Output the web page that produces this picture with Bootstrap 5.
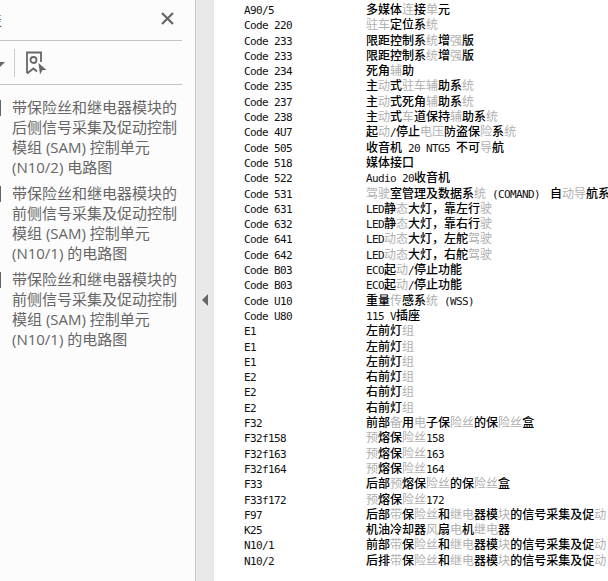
<!doctype html>
<html lang="zh"><head><meta charset="utf-8">
<link href="https://cdn.jsdelivr.net/npm/bootstrap@5.3.0/dist/css/bootstrap.min.css" rel="stylesheet">
<style>
html,body{height:581px;overflow:hidden;background:#fff}
.shell{width:608px;height:581px}
.side{width:196px;background:#fcfcfc;border-right:1px solid #c8c8c8;padding-right:13px;color:#666;font:15px/20px "Open Sans","Noto Sans CJK SC",sans-serif}
.sidehead{height:41px;border-bottom:1px solid #c4c4c4;padding-right:7px;overflow:hidden}
.clipch{margin-left:-13px;font-size:15px}
.closex{width:15px;height:15px;margin-top:-3px}
.sidetool{height:44px;border-bottom:1px solid #c4c4c4}
.caret{width:0;height:0;border-left:5px solid transparent;border-right:5px solid transparent;border-top:5px solid #666;margin-left:-5px;margin-top:3px}
.sep{width:1px;height:28px;background:#ccc;margin:0 11px 0 9px}
.bmitem{padding-left:12px;margin-bottom:6px;position:relative}
.bmlist{padding-top:12px}
.tick{position:absolute;left:0;top:3px;width:1px;height:16px;background:#666}
.gut{width:18px;background:#e9e9e9}
.tri{width:0;height:0;border-top:6px solid transparent;border-bottom:6px solid transparent;border-right:6px solid #666;margin:0 0 0 6px}
.triwrap{margin-top:294px}
.docpg{flex:1;min-width:0;overflow:hidden;padding:1px 0 0 30px;font:12px/15.3px "Noto Sans CJK SC",sans-serif;color:#000}
.rw{height:15.3px;white-space:nowrap;align-items:baseline}
.cd{width:122px;flex:none;font-family:"DejaVu Sans Mono",monospace;font-size:11px;letter-spacing:-.62px;color:#111}
.ds{font-weight:500}
.ds b{font-family:"DejaVu Sans Mono",monospace;font-size:11px;letter-spacing:-.62px;font-weight:400;white-space:pre;color:#111}
.ds b.cmd{margin-right:-2px}
.ds i{font-style:normal;font-weight:400;color:#b0b0b0}
</style></head><body>
<div class="shell d-flex">
<aside class="side flex-none">
<div class="sidehead d-flex justify-content-between align-items-center"><span class="clipch">表</span>
<svg class="closex" viewBox="0 0 15 15"><path d="M2 2 13 13M13 2 2 13" stroke="#666" stroke-width="2.2" fill="none"/></svg></div>
<div class="sidetool d-flex align-items-center"><span class="caret"></span><span class="sep"></span>
<svg width="21" height="24" viewBox="0 0 21 24"><path d="M1 22V1.500H15V11" stroke="#666" stroke-width="1.800" fill="none"/><path d="M1 22.500 7.500 17.500 11 20.500" stroke="#666" stroke-width="1.800" fill="none"/><circle cx="7.500" cy="9" r="3" stroke="#666" stroke-width="1.800" fill="none"/><path d="M12.500 12 20.500 19H16.500L14 23.500Z" fill="#666"/></svg></div>
<div class="bmlist">
<div class="bmitem"><span class="tick"></span>带保险丝和继电器模块的后侧信号采集及促动控制模组 (SAM) 控制单元 (N10/2) 电路图</div>
<div class="bmitem"><span class="tick"></span>带保险丝和继电器模块的前侧信号采集及促动控制模组 (SAM) 控制单元 (N10/1) 的电路图</div>
<div class="bmitem"><span class="tick"></span>带保险丝和继电器模块的前侧信号采集及促动控制模组 (SAM) 控制单元 (N10/1) 的电路图</div>
</div>
</aside>
<div class="gut flex-none"><div class="triwrap"><div class="tri"></div></div></div>
<main class="docpg">
<div class="rw d-flex"><span class="cd">A90/5</span><span class="ds">多媒体<i>连</i>接<i>单</i>元</span></div>
<div class="rw d-flex"><span class="cd">Code 220</span><span class="ds"><i>驻车</i>定位系<i>统</i></span></div>
<div class="rw d-flex"><span class="cd">Code 233</span><span class="ds">限距控制系<i>统</i>增<i>强</i>版</span></div>
<div class="rw d-flex"><span class="cd">Code 233</span><span class="ds">限距控制系<i>统</i>增<i>强</i>版</span></div>
<div class="rw d-flex"><span class="cd">Code 234</span><span class="ds">死角<i>辅</i>助</span></div>
<div class="rw d-flex"><span class="cd">Code 235</span><span class="ds">主<i>动</i>式<i>驻车辅</i>助系<i>统</i></span></div>
<div class="rw d-flex"><span class="cd">Code 237</span><span class="ds">主<i>动</i>式死角<i>辅</i>助系<i>统</i></span></div>
<div class="rw d-flex"><span class="cd">Code 238</span><span class="ds">主<i>动</i>式<i>车</i>道保持<i>辅</i>助系<i>统</i></span></div>
<div class="rw d-flex"><span class="cd">Code 4U7</span><span class="ds">起<i>动</i><b>/</b>停止<i>电压</i>防盗保<i>险</i>系<i>统</i></span></div>
<div class="rw d-flex"><span class="cd">Code 505</span><span class="ds">收音机<b> 20 NTG5 </b>不可<i>导</i>航</span></div>
<div class="rw d-flex"><span class="cd">Code 518</span><span class="ds">媒体接口</span></div>
<div class="rw d-flex"><span class="cd">Code 522</span><span class="ds"><b>Audio 20</b>收音机</span></div>
<div class="rw d-flex"><span class="cd">Code 531</span><span class="ds"><i>驾驶</i>室管理及数据系<i>统</i><b class="cmd"> (COMAND)  </b>自<i>动导</i>航系<i>统</i></span></div>
<div class="rw d-flex"><span class="cd">Code 631</span><span class="ds"><b>LED</b>静<i>态</i>大灯，靠左行<i>驶</i></span></div>
<div class="rw d-flex"><span class="cd">Code 632</span><span class="ds"><b>LED</b>静<i>态</i>大灯，靠右行<i>驶</i></span></div>
<div class="rw d-flex"><span class="cd">Code 641</span><span class="ds"><b>LED</b><i>动态</i>大灯，左舵<i>驾驶</i></span></div>
<div class="rw d-flex"><span class="cd">Code 642</span><span class="ds"><b>LED</b><i>动态</i>大灯，右舵<i>驾驶</i></span></div>
<div class="rw d-flex"><span class="cd">Code B03</span><span class="ds"><b>ECO</b>起<i>动</i><b>/</b>停止功能</span></div>
<div class="rw d-flex"><span class="cd">Code B03</span><span class="ds"><b>ECO</b>起<i>动</i><b>/</b>停止功能</span></div>
<div class="rw d-flex"><span class="cd">Code U10</span><span class="ds">重量<i>传</i>感系<i>统</i><b> (WSS)</b></span></div>
<div class="rw d-flex"><span class="cd">Code U80</span><span class="ds"><b>115 V</b>插座</span></div>
<div class="rw d-flex"><span class="cd">E1</span><span class="ds">左前灯<i>组</i></span></div>
<div class="rw d-flex"><span class="cd">E1</span><span class="ds">左前灯<i>组</i></span></div>
<div class="rw d-flex"><span class="cd">E1</span><span class="ds">左前灯<i>组</i></span></div>
<div class="rw d-flex"><span class="cd">E2</span><span class="ds">右前灯<i>组</i></span></div>
<div class="rw d-flex"><span class="cd">E2</span><span class="ds">右前灯<i>组</i></span></div>
<div class="rw d-flex"><span class="cd">E2</span><span class="ds">右前灯<i>组</i></span></div>
<div class="rw d-flex"><span class="cd">F32</span><span class="ds">前部<i>备</i>用<i>电</i>子保<i>险丝</i>的保<i>险丝</i>盒</span></div>
<div class="rw d-flex"><span class="cd">F32f158</span><span class="ds"><i>预</i>熔保<i>险丝</i><b>158</b></span></div>
<div class="rw d-flex"><span class="cd">F32f163</span><span class="ds"><i>预</i>熔保<i>险丝</i><b>163</b></span></div>
<div class="rw d-flex"><span class="cd">F32f164</span><span class="ds"><i>预</i>熔保<i>险丝</i><b>164</b></span></div>
<div class="rw d-flex"><span class="cd">F33</span><span class="ds">后部<i>预</i>熔保<i>险丝</i>的保<i>险丝</i>盒</span></div>
<div class="rw d-flex"><span class="cd">F33f172</span><span class="ds"><i>预</i>熔保<i>险丝</i><b>172</b></span></div>
<div class="rw d-flex"><span class="cd">F97</span><span class="ds">后部<i>带</i>保<i>险丝</i>和<i>继电</i>器模<i>块</i>的信号采集及促<i>动</i></span></div>
<div class="rw d-flex"><span class="cd">K25</span><span class="ds">机油冷却器<i>风</i>扇<i>电</i>机<i>继电</i>器</span></div>
<div class="rw d-flex"><span class="cd">N10/1</span><span class="ds">前部<i>带</i>保<i>险丝</i>和<i>继电</i>器模<i>块</i>的信号采集及促<i>动</i></span></div>
<div class="rw d-flex"><span class="cd">N10/2</span><span class="ds">后排<i>带</i>保<i>险丝</i>和<i>继电</i>器模<i>块</i>的信号采集及促<i>动</i></span></div>
</main>
</div>
<script src="https://cdn.jsdelivr.net/npm/bootstrap@5.3.0/dist/js/bootstrap.bundle.min.js"></script>
</body></html>
